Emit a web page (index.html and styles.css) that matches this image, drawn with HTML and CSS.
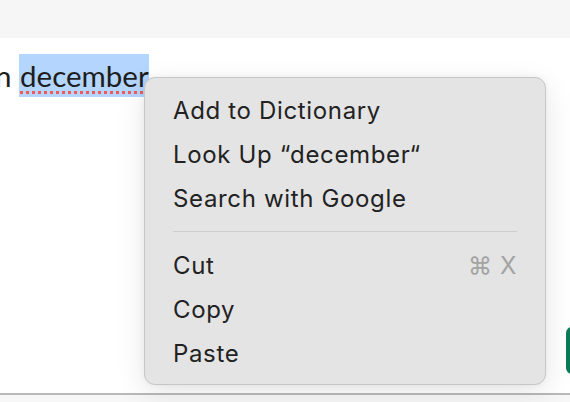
FILE: index.html
```html
<!DOCTYPE html>
<html>
<head>
<meta charset="utf-8">
<link rel="stylesheet" href="styles.css">
</head>
<body>
<div class="page">
  <div class="topbar"></div>
  <div class="content">
    <p class="line"><span class="cut">n</span> <span class="sel">december</span></p>
  </div>
  <div class="bottom-rule"></div>
  <div class="green-btn"></div>
  <div class="menu">
    <div class="item">Add to Dictionary</div>
    <div class="item">Look Up “december“</div>
    <div class="item">Search with Google</div>
    <div class="sep"></div>
    <div class="item"><span>Cut</span><span class="key">⌘ X</span></div>
    <div class="item">Copy</div>
    <div class="item">Paste</div>
  </div>
</div>
</body>
</html>
```
FILE: styles.css
```css
* { box-sizing: border-box; }
html, body { margin: 0; padding: 0; }
body { width: 570px; height: 402px; overflow: hidden; background: #f7f7f7; }
.page { position: relative; width: 570px; height: 402px; display: flex; flex-direction: column; }
.topbar { height: 38px; background: #f6f6f6; flex: none; }
.content { background: #ffffff; height: 355px; flex: none; padding-top: 16px; overflow: hidden; }
.line {
  margin: 0 0 0 -5px;
  font-family: Lato, "Open Sans", sans-serif;
  font-size: 29.5px;
  line-height: 44px;
  color: #1d1d1d;
  white-space: nowrap;
}
.sel {
  background: #b4d5fe;
  padding: 4px 0 4px 1px;
  text-decoration: underline dotted #ef5b5b;
  text-decoration-thickness: 3px;
  text-underline-offset: 4px;
}
.bottom-rule { height: 2px; background: #b9b9b9; flex: none; }
.green-btn {
  position: absolute; left: 566px; top: 327px; width: 20px; height: 47px;
  background: #0b7a58; border-radius: 6px;
}
.menu {
  position: absolute; left: 144px; top: 77px; width: 402px; height: 308px;
  background: #e4e4e4;
  border: 1px solid #c6c6c6;
  border-radius: 11px;
  box-shadow: 0 8px 30px rgba(0,0,0,0.10), 0 0 6px rgba(0,0,0,0.05);
  padding: 10px 28px 10px 28px;
  font-family: Inter, "Liberation Sans", sans-serif;
  font-size: 24px;
  letter-spacing: 0.65px;
  color: #222222;
}
.item {
  height: 44px; display: flex; align-items: center; justify-content: space-between;
  white-space: nowrap;
}
.key { color: #a3a3a3; }
.sep { height: 1px; background: #cdcdcd; margin: 11px 0 11px 0; }
```
